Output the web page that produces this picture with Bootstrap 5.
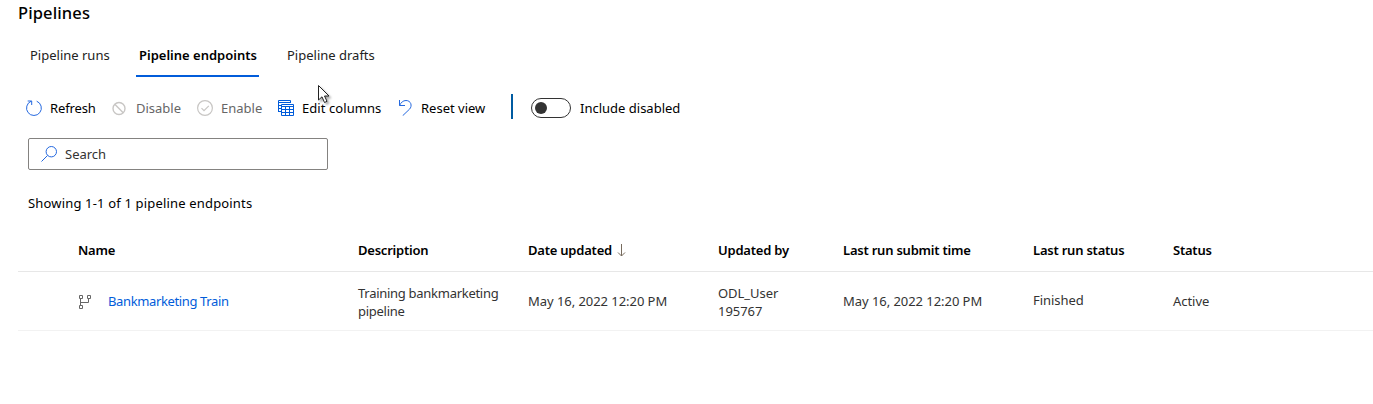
<!DOCTYPE html>
<html lang="en">
<head>
<meta charset="utf-8">
<meta name="viewport" content="width=device-width, initial-scale=1">
<title>Pipelines</title>
<link href="https://cdn.jsdelivr.net/npm/bootstrap@5.3.0/dist/css/bootstrap.min.css" rel="stylesheet">
<style>
body{font-family:"Noto Sans","Open Sans",sans-serif;font-size:13px;line-height:18px;color:#000;background:#fff;overflow:hidden}
svg{display:block;flex:none;fill:none}
h1{font-size:16.5px;line-height:26px;font-weight:500;padding-left:18px;letter-spacing:.12px}
.pipe-tabs{height:51px;padding-left:20px}
.pipe-tabs .nav-link{height:51px;padding:20px 0 0 10px;color:#222;border-radius:0;white-space:nowrap}
.pipe-tabs .nav-link.active{color:#000;font-weight:600;border-bottom:2px solid #015cda;padding-left:3px;width:123px;letter-spacing:0}
.tools{height:62px;padding-left:26px;white-space:nowrap}
.tool{border:0;padding:0;background:none;color:#000;display:flex;align-items:center}
.tool:disabled{color:#666}
.bar{width:2px;height:25px;background:#005ba1;margin-top:-3px}
.toggle{width:40px;height:20px;border:1px solid #333;border-radius:10px;padding:3px}
.toggle i{display:block;width:12px;height:12px;border-radius:50%;background:#333}
.search{width:300px;height:32px;margin:-1px 0 0 28px;border:1px solid #848280;border-radius:2px;padding-left:12px;color:#333}
.count{padding:24px 0 0 28px;height:59px;letter-spacing:.17px}
.line{display:grid;grid-template-columns:60px 280px 170px 190px 125px 190px 140px 1fr;margin-left:18px;align-items:center}
.heads{height:43px;font-weight:600;border-bottom:1px solid #e7e7e7;letter-spacing:-.22px}
.entry{height:59px;border-bottom:1px solid #f2f2f2;color:#333;letter-spacing:-.05px}
.entry a{color:#015cda;text-decoration:none;margin-left:16px;letter-spacing:-.37px}
.two-line{padding-top:2px}
.desc{letter-spacing:-.28px}
.pointer{position:absolute;left:317px;top:84px;filter:drop-shadow(2px 2px 1px #0005)}
</style>
</head>
<body>
<h1 class="m-0">Pipelines</h1>
<nav class="nav pipe-tabs flex-nowrap">
 <a class="nav-link" style="width:116px" href="#">Pipeline runs</a>
 <a class="nav-link active" href="#">Pipeline endpoints</a>
 <a class="nav-link" style="width:150px;padding-left:28px" href="#">Pipeline drafts</a>
</nav>
<div class="tools d-flex align-items-center">
 <button class="tool" style="width:86px;letter-spacing:-.12px"><svg class="me-2" width="16" height="16" stroke="#2468df"><path d="M5.2 1.2A7.4 7.4 0 1 0 10.7 1.2M1.7 1H5.7V5"/></svg>Refresh</button>
 <button class="tool" style="width:85px" disabled><svg width="24" height="16" stroke="#c8c6c4" stroke-width="1.4"><circle cx="7" cy="8.5" r="6"/><path d="M2.8 4.3 11.2 12.7"/></svg>Disable</button>
 <button class="tool" style="width:81px" disabled><svg class="me-2" width="16" height="16" stroke="#c8c6c4" stroke-width="1.2"><circle cx="8" cy="8" r="7.4"/><path d="M4.5 8.2 7 10.7 11.8 5.8"/></svg>Enable</button>
 <button class="tool" style="width:120px;letter-spacing:.07px"><svg class="me-2" width="16" height="16" stroke="#015cda"><path d="M.5 12V.5H12.5V3M.5 2.5H12.5M.5 5.5H3M.5 8.5H3M.5 11.5H3M3.5 4.5H15.5V15.5H3.5ZM3.5 6.5H15.5M3.5 9.5H15.5M3.5 12.5H15.5M7.5 6.5V15.5M11.5 6.5V15.5"/></svg>Edit columns</button>
 <button class="tool" style="width:113px"><svg width="23" height="16" stroke="#2468df"><path d="M1.5 0V5.5H7M1.5 5.5C3 2.5 5 .5 8 .5C13 .5 14.6 6 11.5 9.2L4.7 15.7"/></svg>Reset view</button>
 <span class="bar"></span>
 <span class="toggle" style="margin-left:18px"><i></i></span>
 <span style="margin-left:9px">Include disabled</span>
</div>
<div class="search d-flex align-items-center"><svg class="me-2" width="16" height="16" stroke="#2468df"><circle cx="10.3" cy="5.7" r="5.2"/><path d="M6.5 9.5.5 15.5"/></svg>Search</div>
<div class="count">Showing 1-1 of 1 pipeline endpoints</div>
<div class="line heads"><span></span><span>Name</span><span>Description</span><span class="d-flex align-items-center">Date updated<svg class="ms-1" width="10" height="14" stroke="#776b5d"><path d="M5.5 1V13M2 9.5 5.5 13 9 9.5"/></svg></span><span>Updated by</span><span>Last run submit time</span><span>Last run status</span><span>Status</span></div>
<div class="line entry"><span></span><span class="d-flex align-items-center"><svg width="14" height="15" stroke="#666"><path d="M1.5 1.5H4.5V4.5H1.5ZM9.5 1.5H12.5V4.5H9.5ZM1.5 11.5H4.5V14.5H1.5ZM2.5 5V11M10.5 5V8.5H2.5"/></svg><a href="#">Bankmarketing Train</a></span><span class="two-line desc">Training bankmarketing<br>pipeline</span><span>May 16, 2022 12:20 PM</span><span class="two-line">ODL_User<br>195767</span><span>May 16, 2022 12:20 PM</span><span class="pb-0" style="margin-top:-2px">Finished</span><span>Active</span></div>
<svg class="pointer" width="14" height="21"><path d="M1.5 1.5V16L5 12.8 7.5 18.5 10 17.3 7.5 12H12Z" fill="#fff" stroke="#222"/></svg>
<script src="https://cdn.jsdelivr.net/npm/bootstrap@5.3.0/dist/js/bootstrap.bundle.min.js"></script>
</body>
</html>
